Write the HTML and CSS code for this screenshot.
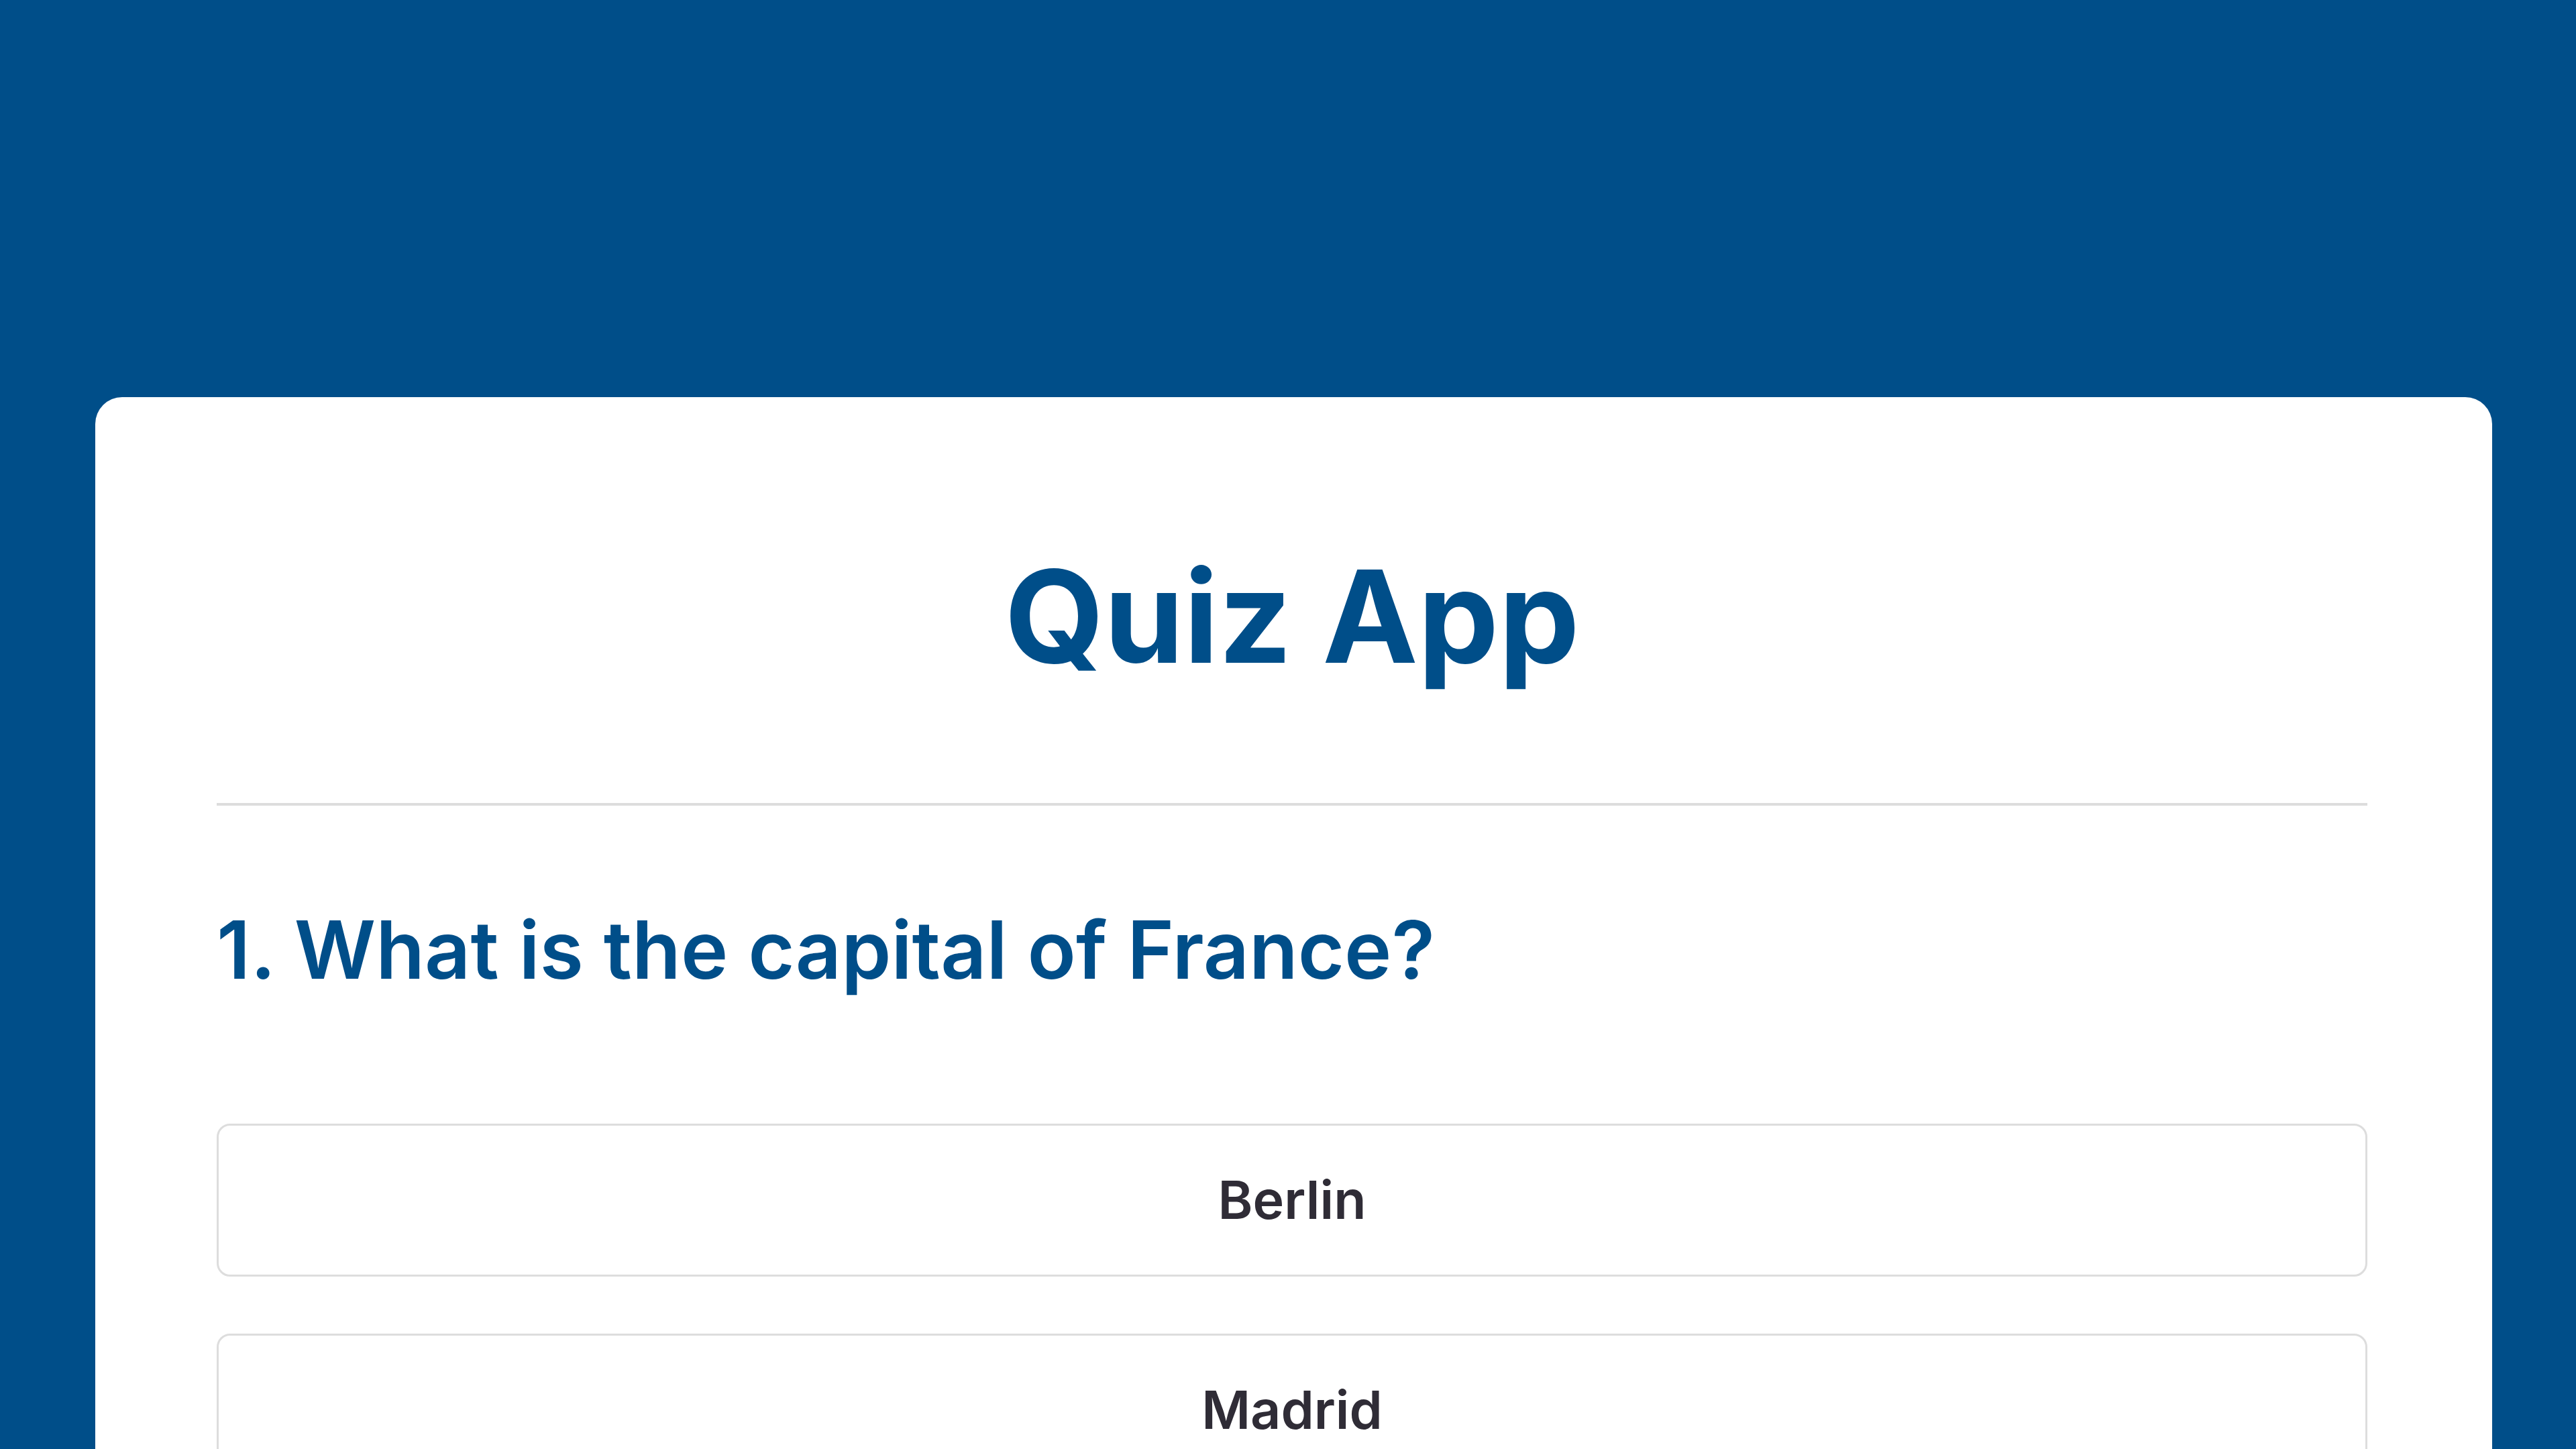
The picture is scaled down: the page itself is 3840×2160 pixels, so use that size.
FILE: index.html
```html
<!DOCTYPE html>
<html lang="en">
<head>
<meta charset="utf-8">
<title>Quiz App</title>
<link rel="stylesheet" href="styles.css">
</head>
<body>
<main class="page">
  <section class="card">
    <h1 class="title">Quiz App</h1>
    <hr class="divider">
    <h2 class="question">1. What is the capital of France?</h2>
    <div class="options">
      <button class="option">Berlin</button>
      <button class="option">Madrid</button>
      <button class="option">Paris</button>
      <button class="option">Rome</button>
    </div>
  </section>
</main>
</body>
</html>
```

FILE: styles.css
```css
html, body {
  margin: 0;
  padding: 0;
  background: #004e89;
  height: 100%;
  overflow: hidden;
}

body {
  font-family: Inter, "Noto Sans", "Liberation Sans", sans-serif;
}

.page {
  padding: 592px 125px 0 142px;
}

.card {
  background: #ffffff;
  border-radius: 40px;
  padding: 206px 186px 200px 181px;
}

.title {
  margin: 0;
  font-size: 191px;
  line-height: 242px;
  font-weight: 700;
  color: #004e89;
  text-align: center;
}

.divider {
  margin: 157px 0 0 0;
  border: 0;
  height: 4px;
  background: #dddddd;
}

.question {
  margin: 143px 0 0 0;
  font-size: 119px;
  line-height: 145px;
  font-weight: 600;
  color: #004e89;
}

.options {
  margin-top: 186px;
  display: flex;
  flex-direction: column;
  gap: 85px;
}

.option {
  display: block;
  width: 100%;
  margin: 0;
  padding: 62px 0 63px;
  background: #ffffff;
  border: 3px solid #dddddd;
  border-radius: 20px;
  font-family: Inter, "Noto Sans", "Liberation Sans", sans-serif;
  font-size: 79px;
  line-height: 97px;
  font-weight: 600;
  color: #2f2c36;
  text-align: center;
}
```
